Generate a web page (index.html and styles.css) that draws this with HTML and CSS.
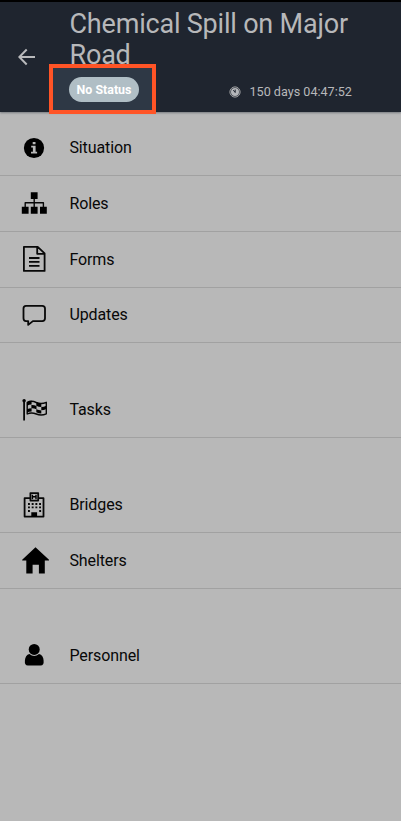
FILE: index.html
```html
<!DOCTYPE html>
<html lang="en">
<head>
<meta charset="utf-8">
<title>Chemical Spill on Major Road</title>
<link rel="stylesheet" href="styles.css">
</head>
<body>
<header class="header">
  <svg class="back" viewBox="0 0 18 18"><path d="M17 9H1.5M8.7 1.5L1.3 9l7.4 7.5"/></svg>
  <div class="heading">
    <h1 class="title">Chemical Spill on Major Road</h1>
    <div class="meta">
      <div class="timer">
        <svg class="clock" viewBox="0 0 12 12"><circle cx="6" cy="6" r="5.1" class="rim"/><circle cx="6" cy="6" r="4" class="face"/><path d="M6.2 6.5L4.3 4.1M6.2 6.5V3.5"/></svg>
        <span>150 days 04:47:52</span>
      </div>
    </div>
  </div>
  <div class="highlight"><span class="pill">No Status</span></div>
</header>
<main>
  <ul class="group">
    <li class="row first">
      <svg class="icon" viewBox="0 0 40 40"><circle cx="20" cy="20" r="10.1"/><path class="cut" d="M18.7 13.9h2.8v2.3h-2.8zM17.2 17.8h4.4v6h1.5v1.8h-6.1v-1.8h1.9v-4.3h-1.7z"/></svg>
      <span>Situation</span>
    </li>
    <li class="row">
      <svg class="icon" viewBox="0 0 40 40"><path d="M16.8 9.3h6.8v6.8h-6.8zM7.8 23.8h6.8v7H7.8zM16.8 23.8h6.8v7h-6.8zM26 23.8h6.8v7H26z"/><path class="line thin" d="M20.2 16v8M11.2 24v-4.2h18.2V24"/></svg>
      <span>Roles</span>
    </li>
    <li class="row">
      <svg class="icon" viewBox="0 0 40 40"><path class="line" d="M9.9 7.8h13.8l6.9 6.5v17.6H9.9zM23.2 7.8v7h7.4M15 19h10.5M15 22.9h10.5M15 26.9h10.5"/></svg>
      <span>Forms</span>
    </li>
    <li class="row">
      <svg class="icon" viewBox="0 0 40 40"><path class="line" d="M12 10.8h16.2q2.8 0 2.8 2.8v9.7q0 2.8-2.8 2.8h-9.3l-4.7 3.8v-3.8H12q-2.5 0-2.5-2.8v-9.7q0-2.8 2.5-2.8z"/></svg>
      <span>Updates</span>
    </li>
  </ul>
  <ul class="group">
    <li class="row">
      <svg class="icon" viewBox="0 0 40 40"><circle cx="10.1" cy="10.8" r="1.7"/><path class="line" d="M10.1 11v19.6"/><path class="line thin" d="M13.2 12.5q4-2.4 9.1 0 5 2 10-.2v11.5q-5 2.3-10 .2-5-2.1-9.1 0z"/><path d="M13 11.9q2-1 4.6-1.1v3.6q-2.4 0-4.6 1.3zM22.3 12.3q2.4 1.1 5 1.2v3.6q-2.6-.2-5-1.3zM17.4 15q3-.1 5.1 1v3.2q-2.5-1.1-5.1-1zM27.3 17q2.6 0 5-1.2V19q-2.4 1.2-5 1.2zM13 19.3q2-1 4.6-1v3.2q-2.4 0-4.6 1.1zM22.3 19.2q2.4 1.1 5 1.2v3.2q-2.6-.2-5-1.3z"/></svg>
      <span>Tasks</span>
    </li>
  </ul>
  <ul class="group">
    <li class="row">
      <svg class="icon" viewBox="0 0 40 40"><path class="line" d="M16 13.2h-5.4v18.4h18.9V13.2h-5.3M16.4 8.1h7.8v7.5h-7.8z"/><path d="M17.7 9.7h1.4V11h2.2V9.7h1.4v4.5h-1.4v-1.8h-2.2v1.8h-1.4zM17.3 27.2h5.8v4.8h-5.8z"/><path class="line dots" d="M14 19h13M14 22.4h13M14 26h2M25.2 26h2"/></svg>
      <span>Bridges</span>
    </li>
    <li class="row">
      <svg class="icon" viewBox="0 0 40 40"><path d="M21.5 7.2L35 19.8v.8h-4.2v12.8h-5.9v-8.6h-6.3v8.6h-6.3V20.6H8.2v-.8z"/></svg>
      <span>Shelters</span>
    </li>
  </ul>
  <ul class="group">
    <li class="row">
      <svg class="icon" viewBox="0 0 40 40"><circle cx="20.2" cy="14.4" r="5.5"/><path d="M15.4 18.9q4.8 4.3 9.6 0 4.4 1.2 4.6 6.6.5 5.1-3 5.1H13.9q-3.5 0-3-5.1.3-5.5 4.5-6.6z"/></svg>
      <span>Personnel</span>
    </li>
  </ul>
</main>
</body>
</html>
```
FILE: styles.css
```css
* { box-sizing: border-box; }
body {
  margin: 0;
  min-height: 821px;
  background: #b8b8b8;
  color: #080808;
  font-family: Roboto, "Liberation Sans", sans-serif;
}
.header {
  position: relative;
  display: flex;
  height: 112px;
  padding-left: 18px;
  background: #1f252f;
  border-top: 2px solid #000;
  color: #b7b8ba;
  box-shadow: 0 1px 2px #777b80;
}
.back {
  width: 18px;
  height: 18px;
  margin-top: 46px;
  flex: none;
  fill: none;
  stroke: #b9babc;
  stroke-width: 2;
}
.heading { margin-left: 33.5px; flex: 1; }
.title {
  width: 300px;
  margin: 7px 0 0;
  font-size: 27px;
  font-weight: 400;
  line-height: 31px;
  letter-spacing: -0.2px;
}
.meta { display: flex; padding: 11px 0 0 159.5px; }
.timer {
  display: flex;
  align-items: center;
  gap: 8.5px;
  font-size: 12.6px;
  line-height: 20px;
  white-space: nowrap;
}
.clock { width: 12px; height: 12px; fill: none; stroke: #a5a6a8; }
.clock .face { fill: #b4b6b9; stroke: none; }
.clock path { stroke: #1f252f; }
.highlight {
  position: absolute;
  left: 49px;
  top: 62px;
  width: 107px;
  height: 50px;
  padding: 9px 0 0 16px;
  border: 4px solid #ff5426;
  background: #2e3845;
}
.pill {
  display: block;
  width: 70px;
  height: 25px;
  border-radius: 13px;
  background: #b0bec5;
  color: #fff;
  font-size: 12.4px;
  font-weight: 700;
  line-height: 26px;
  text-align: center;
}
.group { margin: 0 0 39px; padding: 0; list-style: none; }
.row {
  display: flex;
  align-items: center;
  height: 55.8px;
  padding-left: 14px;
  border-bottom: 1px solid #a1a1a1;
  font-size: 16px;
  letter-spacing: -0.1px;
}
.row.first { height: 64px; padding-top: 8px; }
.icon { width: 40px; height: 40px; margin-right: 15.4px; flex: none; }
.cut { fill: #b8b8b8; }
.line { fill: none; stroke: #080808; stroke-width: 1.8; stroke-linejoin: round; }
.thin { stroke-width: 1.4; }
.dots { stroke-width: 1.8; stroke-dasharray: 1.9 1.8; }
```
